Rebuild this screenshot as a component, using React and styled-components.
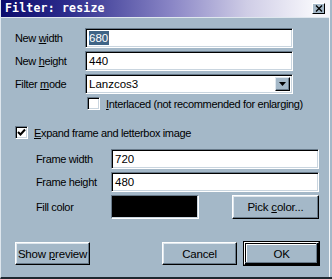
import React from "react";
import styled, { createGlobalStyle } from "styled-components";

const BG = "#a4b8c8";
const DARK = "#687a8a";
const LIGHT = "#dfe7ee";

const Global = createGlobalStyle`
  html, body { margin: 0; padding: 0; background: ${BG}; }
  body { font-family: "Liberation Sans", Arial, sans-serif; font-size: 11px; color: #000; }
  * { box-sizing: border-box; }
`;

const Window = styled.div`
  width: 332px;
  height: 279px;
  background: ${BG};
  border-left: 1px solid ${LIGHT};
  border-bottom: 2px solid #1e2830;
  display: flex;
  flex-direction: column;
  position: relative;
  &::after {
    content: "";
    position: absolute;
    right: 2px;
    top: 0;
    bottom: 0;
    width: 1px;
    background: #f4f7fa;
  }
`;

const TitleBar = styled.div`
  height: 18px;
  display: flex;
  align-items: center;
  justify-content: space-between;
  padding: 0 4px 1px 4px;
  margin-right: 3px;
  background: linear-gradient(to right, #0b0b6c 0%, #2c2c8c 20%, #8a86c6 52%, #cfcde6 75%, #f6f6fb 95%);
  border-bottom: 1px solid ${LIGHT};
`;

const Title = styled.span`
  font-family: "DejaVu Sans Mono", "Liberation Mono", monospace;
  font-weight: bold;
  font-size: 11.5px;
  color: #fff;
  letter-spacing: 0.2px;
`;

const CloseButton = styled.div`
  width: 13px;
  height: 11px;
  margin-top: 1px;
  background: ${BG};
  border: 1px solid;
  border-color: #fff #000 #000 #fff;
  display: flex;
  align-items: center;
  justify-content: center;
`;

const Body = styled.div`
  padding: 10px 0 0 13px;
  display: flex;
  flex-direction: column;
`;

const FormGrid = styled.div`
  display: grid;
  grid-template-columns: ${(p) => p.$labelWidth}px 208px;
  grid-template-rows: ${(p) => p.$rows};
  row-gap: 3px;
  margin-left: ${(p) => p.$indent || 0}px;
  margin-top: ${(p) => p.$top || 0}px;
  align-items: center;
`;

const Label = styled.span`
  font-size: 11px;
  letter-spacing: -0.35px;
  white-space: nowrap;
`;

const Sunken = styled.div`
  height: 100%;
  border: 1px solid;
  border-color: ${DARK} #fff #fff ${DARK};
  box-shadow: inset 1px 1px 0 #000, inset -1px -1px 0 #c9d5df;
  background: #fff;
`;

const TextField = styled(Sunken)`
  display: flex;
  align-items: center;
  padding-left: 3px;
  font-size: 11.5px;
`;

const Selected = styled.span`
  background: #3f6486;
  color: #fff;
  padding: 0 1px 0 0;
  line-height: 14px;
`;

const SelectBox = styled(Sunken)`
  display: flex;
  align-items: stretch;
  padding: 2px 2px 2px 3px;
  font-size: 11.5px;
`;

const SelectValue = styled.span`
  flex: 1;
  display: flex;
  align-items: center;
`;

const ArrowButton = styled.div`
  width: 15px;
  background: ${BG};
  border: 1px solid;
  border-color: ${LIGHT} #000 #000 ${LIGHT};
  box-shadow: inset -1px -1px 0 ${DARK};
  display: flex;
  align-items: center;
  justify-content: center;
`;

const CheckRow = styled.label`
  display: flex;
  align-items: center;
  gap: 6px;
  height: 13px;
  margin-left: ${(p) => p.$indent}px;
  margin-top: ${(p) => p.$top}px;
  font-size: 11px;
  letter-spacing: -0.35px;
`;

const CheckBox = styled.span`
  width: 13px;
  height: 13px;
  flex: none;
  border: 1px solid;
  border-color: ${DARK} #fff #fff ${DARK};
  box-shadow: inset 1px 1px 0 #000, inset -1px -1px 0 #c9d5df;
  background: #fff;
  display: flex;
  align-items: center;
  justify-content: center;
`;

const FillRow = styled.div`
  display: flex;
  justify-content: space-between;
  height: 100%;
`;

const Swatch = styled.div`
  width: 88px;
  height: 100%;
  background: #000;
  border: 1px solid;
  border-color: ${DARK} #fff #fff ${DARK};
  box-shadow: inset -1px -1px 0 #c9d5df;
`;

const Button = styled.div`
  width: ${(p) => p.$width || 75}px;
  height: ${(p) => p.$height || 23}px;
  background: ${BG};
  border: 1px solid;
  border-color: #fff #000 #000 #fff;
  box-shadow: inset -1px -1px 0 ${DARK}, inset 1px 1px 0 ${LIGHT};
  display: flex;
  align-items: center;
  justify-content: center;
  font-size: 11.5px;
  letter-spacing: -0.2px;
  ${(p) =>
    p.$default &&
    `
    outline: 1px solid #000;
    outline-offset: 0;
    border-color: #fff #000 #000 #fff;
    box-shadow: inset -1px -1px 0 #000, inset -2px -2px 0 ${DARK}, inset 1px 1px 0 #000, inset 2px 2px 0 #fff;
  `}
`;

const ButtonRow = styled.div`
  display: flex;
  align-items: center;
  width: 304px;
  margin: 23px 0 0 1px;
  gap: 7px;
`;

const Spacer = styled.div`
  flex: 1;
`;

export default function App() {
  return (
    <>
      <Global />
      <Window>
        <TitleBar>
          <Title>Filter: resize</Title>
          <CloseButton>
            <svg width="8" height="7" viewBox="0 0 8 7">
              <path d="M1 0.5 L7 6.5 M7 0.5 L1 6.5" stroke="#000" strokeWidth="1.3" />
            </svg>
          </CloseButton>
        </TitleBar>
        <Body>
          <FormGrid $labelWidth={70} $rows="20px 20px 20px" $indent={1}>
            <Label>New <u>w</u>idth</Label>
            <TextField>
              <Selected>680</Selected>
            </TextField>
            <Label>New <u>h</u>eight</Label>
            <TextField>440</TextField>
            <Label>Filter <u>m</u>ode</Label>
            <SelectBox>
              <SelectValue>Lanzcos3</SelectValue>
              <ArrowButton>
                <svg width="7" height="4" viewBox="0 0 7 4">
                  <path d="M0 0 H7 L3.5 4 Z" fill="#000" />
                </svg>
              </ArrowButton>
            </SelectBox>
          </FormGrid>
          <CheckRow $indent={73} $top={3}>
            <CheckBox />
            <span>
              <u>I</u>nterlaced (not recommended for enlarging)
            </span>
          </CheckRow>
          <CheckRow $indent={1} $top={16}>
            <CheckBox>
              <svg width="9" height="9" viewBox="0 0 9 9">
                <path d="M1 4 L3.5 6.5 L8 1.5" stroke="#000" strokeWidth="2" fill="none" />
              </svg>
            </CheckBox>
            <span>
              <u>E</u>xpand frame and letterbox image
            </span>
          </CheckRow>
          <FormGrid $labelWidth={75} $rows="20px 20px 24px" $indent={22} $top={10}>
            <Label>Frame width</Label>
            <TextField>720</TextField>
            <Label>Frame height</Label>
            <TextField>480</TextField>
            <Label>Fill color</Label>
            <FillRow>
              <Swatch />
              <Button $width={87} $height={24}>
                <span>
                  Pick <u>c</u>olor...
                </span>
              </Button>
            </FillRow>
          </FormGrid>
          <ButtonRow>
            <Button>
              <span>
                Show <u>p</u>review
              </span>
            </Button>
            <Spacer />
            <Button>
              <span>Cancel</span>
            </Button>
            <Button $default>
              <span>OK</span>
            </Button>
          </ButtonRow>
        </Body>
      </Window>
    </>
  );
}
